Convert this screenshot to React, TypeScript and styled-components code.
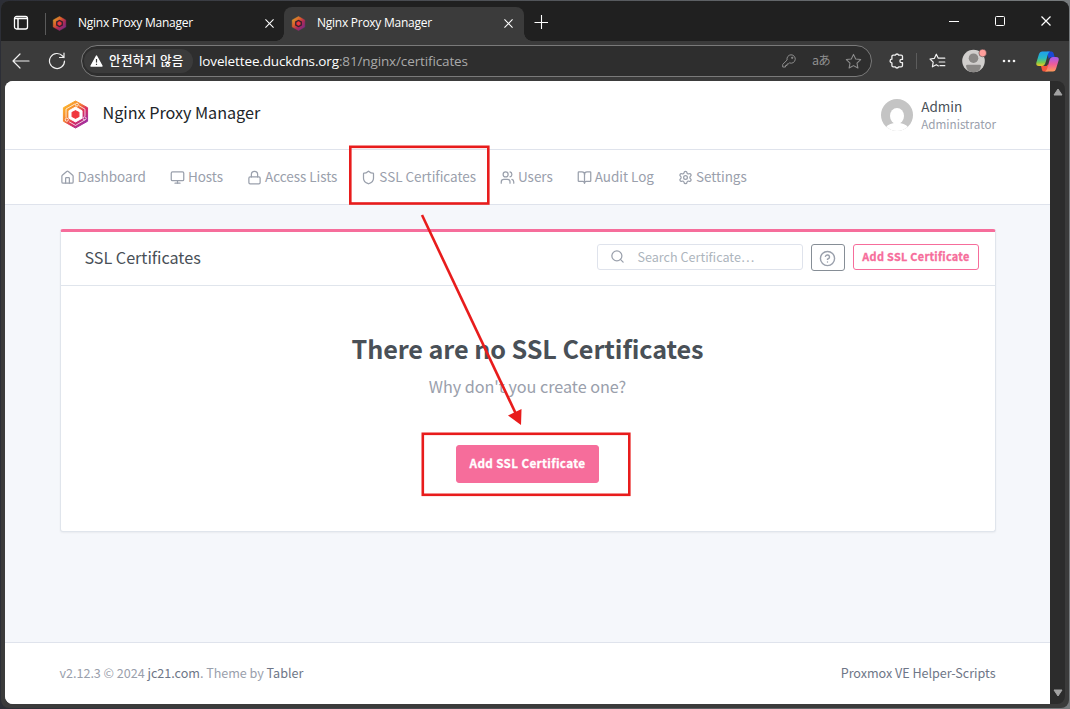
import React from "react";
import styled, { createGlobalStyle } from "styled-components";
import { House, Monitor, Lock, Shield, Users, BookOpen, Settings, Search, CircleHelp } from "lucide-react";

const sans = `"Noto Sans CJK KR", "Noto Sans CJK JP", "Noto Sans", sans-serif`;
const chrome = `"Open Sans", "Noto Sans CJK KR", sans-serif`;

const GlobalStyle = createGlobalStyle`
  * { box-sizing: border-box; }
  body { margin: 0; background: #34363b; overflow: hidden; }
`;

const Desktop = styled.div`
  position: relative;
  width: 1070px;
  height: 709px;
  padding: 1px 1px 1px;
  background: linear-gradient(90deg, #2c2e36, #777b7d);
`;

const BrowserWindow = styled.div`
  display: flex;
  flex-direction: column;
  height: 707px;
  border-radius: 8px;
  overflow: hidden;
  background: #3b3b3b;
  font-family: ${chrome};
`;

const TitleBar = styled.div`
  display: flex;
  align-items: flex-end;
  height: 40px;
  flex: none;
  background: #202020;
`;

const TabActions = styled.div`
  width: 45px;
  height: 34px;
  padding: 8px 0 0 12px;
  border-right: 1px solid transparent;
  border-image: linear-gradient(#202020 7px, #5a5a5a 7px, #5a5a5a 27px, #202020 27px) 1;
  line-height: 0;
`;

const Tab = styled.div<{ $active?: boolean; $width: number }>`
  position: relative;
  display: flex;
  align-items: center;
  width: ${(p) => p.$width}px;
  height: 34px;
  padding: 0 ${(p) => (p.$active ? 11 : 10)}px 2px ${(p) => (p.$active ? 7 : 6)}px;
  border-radius: 8px 8px 0 0;
  color: #fff;
  background: ${(p) => (p.$active ? "#3b3b3b" : "transparent")};
  ${(p) =>
    p.$active &&
    `
    &::before, &::after {
      content: "";
      position: absolute;
      bottom: 0;
      width: 8px;
      height: 8px;
    }
    &::before { left: -8px; background: radial-gradient(circle at 0 0, transparent 7.5px, #3b3b3b 8px); }
    &::after { right: -8px; background: radial-gradient(circle at 100% 0, transparent 7.5px, #3b3b3b 8px); }
  `}
`;

const TabTitle = styled.span`
  flex: 1;
  margin-left: 11px;
  font-size: 12px;
  line-height: 16px;
  letter-spacing: -0.26px;
  white-space: nowrap;
`;

const NewTab = styled.div`
  flex: 1;
  height: 34px;
  padding: 8px 0 0 10px;
  line-height: 0;
`;

const WindowButton = styled.div`
  display: flex;
  justify-content: center;
  align-items: center;
  width: 46px;
  height: 40px;
  padding-bottom: 1px;
`;

const Toolbar = styled.div`
  display: flex;
  align-items: center;
  height: 40px;
  flex: none;
  color: #f0f0f0;
`;

const ToolSlot = styled.div<{ $width: number }>`
  display: flex;
  justify-content: center;
  align-items: center;
  flex: none;
  width: ${(p) => p.$width}px;
`;

const AddressBar = styled.div`
  display: flex;
  align-items: center;
  width: 791px;
  height: 32px;
  padding: 0 1px 0 2px;
  border: 1px solid #7a7a7a;
  border-radius: 16px;
  background: #2e2e2e;
`;

const SecurityBadge = styled.div`
  display: flex;
  align-items: center;
  gap: 6px;
  width: 109px;
  height: 24px;
  padding-left: 6px;
  border-radius: 12px;
  background: #3b3b3b;
  color: #fff;
  font: 500 12.6px/16px "Noto Sans CJK KR", sans-serif;
  letter-spacing: 0.35px;
  white-space: nowrap;
`;

const BadgeText = styled.span`
  margin-top: -3px;
`;

const Url = styled.div`
  flex: 1;
  margin-left: 6px;
  color: #fff;
  font-size: 13.5px;
  line-height: 20px;
  letter-spacing: -0.13px;
  white-space: nowrap;
  span { color: #a9a9a9; }
`;

const Translate = styled.span`
  margin-top: -2px;
  color: #8d8d8d;
  font: 400 12.5px/18px "Noto Sans CJK JP", sans-serif;
  letter-spacing: -0.8px;
`;

const Divider = styled.div`
  width: 1px;
  height: 16px;
  background: #5c5c5c;
`;

const ViewportRow = styled.div`
  display: flex;
  height: 623px;
  margin: 0 4px 0 4px;
  border-radius: 8px;
  overflow: hidden;
`;

const Page = styled.div`
  display: flex;
  flex-direction: column;
  width: 1045px;
  background: #f5f7fb;
  font-family: ${sans};
  color: #495057;
`;

const ScrollBar = styled.div`
  display: flex;
  flex-direction: column;
  justify-content: space-between;
  align-items: center;
  width: 15px;
  padding: 7px 0;
  background: #2c2c2c;
`;

const Header = styled.header`
  display: flex;
  justify-content: space-between;
  align-items: center;
  height: 69px;
  padding: 0 54px 0 56px;
  border-bottom: 1px solid #dfe3ec;
  background: #fff;
`;

const Brand = styled.div`
  display: flex;
  align-items: center;
  gap: 12.5px;
  padding-bottom: 1px;
  color: #212529;
  font-size: 16.2px;
  line-height: 24px;
  letter-spacing: -0.03px;
`;

const BrandName = styled.span`
  margin-top: -6px;
`;

const User = styled.div`
  display: flex;
  align-items: center;
  gap: 8px;
  padding-bottom: 1px;
`;

const UserName = styled.div`
  font-size: 13.5px;
  line-height: 18px;
`;

const UserRole = styled.div`
  color: #9aa0ac;
  font-size: 11.7px;
  line-height: 17px;
`;

const Nav = styled.nav`
  display: flex;
  align-items: center;
  gap: 24px;
  height: 55px;
  padding: 0 54.5px;
  border-bottom: 1px solid #dfe3ec;
  background: #fff;
`;

const NavItem = styled.a`
  display: flex;
  align-items: center;
  gap: 3px;
  color: #9aa0ac;
  font-size: 13.5px;
  line-height: 22px;
  letter-spacing: -0.04px;
  white-space: nowrap;
  span { margin-top: -2px; }
`;

const Main = styled.main`
  flex: 1;
  padding: 24px 54px 0 55px;
`;

const Card = styled.section`
  height: 303px;
  border: 1px solid #e0e5ec;
  border-top: 3px solid #f66d9b;
  border-radius: 3px;
  background: #fff;
  box-shadow: 0 1px 2px rgba(0, 0, 0, 0.05);
`;

const CardHeader = styled.div`
  display: flex;
  align-items: flex-start;
  gap: 8px;
  height: 54px;
  padding: 12px 16px 0 23.5px;
  border-bottom: 1px solid #e0e5ec;
`;

const CardTitle = styled.h3`
  flex: 1;
  margin: 1px 0 0;
  font-size: 16.2px;
  font-weight: 400;
  line-height: 24px;
  letter-spacing: -0.03px;
`;

const SearchField = styled.div`
  display: flex;
  align-items: center;
  gap: 13px;
  width: 206px;
  height: 26px;
  padding-left: 12px;
  border: 1px solid #dfe3ec;
  border-radius: 3px;
  color: #9aa0ac;
  font-size: 12.6px;
  line-height: 20px;
  svg { margin: -1px 0 0 -0.5px; }
  span { color: #adb5bd; }
`;

const HelpButton = styled.button`
  display: flex;
  justify-content: center;
  align-items: center;
  width: 34px;
  height: 27px;
  padding: 1px 1px 0 0;
  border: 1px solid #868e96;
  border-radius: 3px;
  background: #fff;
  color: #9aa0ac;
`;

const AddButton = styled.button<{ $filled?: boolean }>`
  width: ${(p) => (p.$filled ? 143 : 126)}px;
  height: ${(p) => (p.$filled ? 38 : 26)}px;
  padding: 0 0 2px;
  border: 1px solid #f66d9b;
  border-radius: 3px;
  background: ${(p) => (p.$filled ? "#f66d9b" : "#fff")};
  color: ${(p) => (p.$filled ? "#fff" : "#f66d9b")};
  font: 700 ${(p) => (p.$filled ? "11.7px" : "10.9px")} / 20px ${sans};
  letter-spacing: ${(p) => (p.$filled ? 0.36 : 0.3)}px;
  -webkit-text-stroke: 0.3px currentColor;
  white-space: nowrap;
`;

const EmptyState = styled.div`
  display: flex;
  flex-direction: column;
  align-items: center;
  padding: 46px 1px 0 0;
`;

const EmptyTitle = styled.h1`
  margin: 0;
  font-size: 25.2px;
  font-weight: 700;
  line-height: 32px;
  letter-spacing: -0.08px;
  white-space: nowrap;
`;

const EmptyText = styled.p`
  margin: 10px 0 47px;
  color: #9aa0ac;
  font-size: 16.2px;
  line-height: 24px;
  letter-spacing: -0.03px;
`;

const Footer = styled.footer`
  display: flex;
  justify-content: space-between;
  height: 62px;
  padding: 20px 54.5px 0;
  border-top: 1px solid #dfe3ec;
  background: #fff;
  color: #9aa0ac;
  font-size: 12.6px;
  line-height: 20px;
  letter-spacing: -0.03px;
  a { color: #6e7687; }
`;

const Annotations = styled.svg`
  position: absolute;
  left: 0;
  top: 0;
`;

const Logo = ({ size, small, id }: { size: number; small?: boolean; id: string }) => (
  <svg width={size} height={size} viewBox="0 0 30 30">
    <defs>
      <linearGradient id={id} x1="0.1" y1="0.1" x2="0.9" y2="0.95">
        <stop offset="0" stopColor={small ? "#d99a2c" : "#fbb62c"} />
        <stop offset="0.35" stopColor={small ? "#dc5a2c" : "#f5832d"} />
        <stop offset="0.6" stopColor={small ? "#b02a56" : "#dd2c5c"} />
        <stop offset="1" stopColor={small ? "#742a8c" : "#8e2bb0"} />
      </linearGradient>
    </defs>
    <path d="M15 1 27.5 8v14L15 29 2.5 22V8Z" fill={`url(#${id})`} stroke={`url(#${id})`} strokeLinejoin="round" />
    {!small && (
      <g fill="none" stroke="#fff" strokeWidth="0.8">
        <path d="M14.6 4 5.2 9.3v9M24.8 20.5 15 26.3l-6.5-3.7M24.8 16.5v-7l-6-3.5" />
        <circle cx="6" cy="20.4" r="1.6" />
        <circle cx="16.5" cy="4.8" r="1.5" />
        <circle cx="24.4" cy="19" r="1.6" />
      </g>
    )}
    <path d="M15 7.3 21.8 11.1v7.8L15 22.7l-6.8-3.8v-7.8Z" fill={small ? "#33212e" : "#fff"} stroke={small ? "none" : "#fff"} strokeLinejoin="round" />
    <path d="M15 11 18.5 13v4L15 19l-3.5-2v-4Z" fill="#f0383f" stroke="#f0383f" strokeWidth="1.2" strokeLinejoin="round" />
  </svg>
);

const CloseIcon = ({ size = 10 }: { size?: number }) => (
  <svg width={size} height={size} viewBox="0 0 10 10" fill="none" stroke="#fff" strokeWidth="1.2">
    <path d="M.5.5l9 9M9.5.5l-9 9" />
  </svg>
);

const starPath = "M8 1.3l2.05 4.3 4.7.6-3.45 3.25.85 4.7L8 11.85l-4.15 2.3.85-4.7L1.25 6.2l4.7-.6Z";

const navItems = [
  { label: "Dashboard", Icon: House },
  { label: "Hosts", Icon: Monitor },
  { label: "Access Lists", Icon: Lock },
  { label: "SSL Certificates", Icon: Shield },
  { label: "Users", Icon: Users },
  { label: "Audit Log", Icon: BookOpen },
  { label: "Settings", Icon: Settings },
];

const BrowserTab = ({ active, width, id }: { active?: boolean; width: number; id: string }) => (
  <Tab $active={active} $width={width}>
    <Logo size={15} small id={id} />
    <TabTitle>Nginx Proxy Manager</TabTitle>
    <CloseIcon size={9} />
  </Tab>
);

const BrowserToolbar = () => (
  <Toolbar>
    <ToolSlot $width={40}>
      <svg width="18" height="16" viewBox="0 0 18 16" fill="none" stroke="currentColor" strokeWidth="1.2" strokeLinecap="round" strokeLinejoin="round">
        <path d="M17 8H1M8 1 1 8l7 7" />
      </svg>
    </ToolSlot>
    <ToolSlot $width={32}>
      <svg width="18" height="18" viewBox="0 0 18 18" fill="none" stroke="currentColor" strokeWidth="1.2" strokeLinecap="round">
        <path d="M16.5 9A7.5 7.5 0 1 1 14.6 4L16 5.5M16 1v4.5h-4.5" />
      </svg>
    </ToolSlot>
    <ToolSlot $width={8} />
    <AddressBar>
      <SecurityBadge>
        <svg width="13" height="12" viewBox="0 0 13 12">
          <path d="M6.5 1 12 11H1Z" fill="#fff" stroke="#fff" strokeWidth="1.4" strokeLinejoin="round" />
          <path d="M6.5 4v3.5M6.5 8.7v1.3" stroke="#3b3b3b" strokeWidth="1.2" />
        </svg>
        <BadgeText>안전하지 않음</BadgeText>
      </SecurityBadge>
      <Url>lovelettee.duckdns.org<span>:81/nginx/certificates</span></Url>
      <ToolSlot $width={32}>
        <svg width="14" height="14" viewBox="0 0 14 14" fill="none" stroke="#8d8d8d" strokeWidth="1">
          <path d="M9 .8a4.2 4.2 0 1 1-1.5 8.1L6.2 10H5v1.5H3.5V13H.7v-2.6L5.1 6A4.2 4.2 0 0 1 9 .8Z" />
          <circle cx="10.2" cy="3.8" r=".7" fill="#8d8d8d" />
        </svg>
      </ToolSlot>
      <ToolSlot $width={32}><Translate>aあ</Translate></ToolSlot>
      <ToolSlot $width={33}>
        <svg width="17" height="17" viewBox="0 0 16 16" fill="none" stroke="#8d8d8d" strokeLinejoin="round"><path d={starPath} /></svg>
      </ToolSlot>
    </AddressBar>
    <ToolSlot $width={8} />
    <ToolSlot $width={34}>
      <svg width="16" height="16" viewBox="0 0 16 16" fill="none" stroke="currentColor" strokeWidth="1.3" strokeLinejoin="round">
        <path d="M4.3 2.2h2a1.8 1.8 0 0 1 3.4 0h2.4q1.4 0 1.4 1.4v2.8h-1a1.6 1.6 0 0 0 0 3.2h1v2.8q0 1.4-1.4 1.4H9.7a1.8 1.8 0 0 1-3.4 0h-2q-1.4 0-1.4-1.4V9.8a1.8 1.8 0 1 1 0-3.6V3.6q0-1.4 1.4-1.4Z" />
      </svg>
    </ToolSlot>
    <ToolSlot $width={5}><Divider /></ToolSlot>
    <ToolSlot $width={37}>
      <svg width="17" height="16" viewBox="0 0 17 16" fill="none" stroke="currentColor" strokeWidth="1.2" strokeLinejoin="round" strokeLinecap="round">
        <path d="M9.3 5.2 7.3 1.2 5.3 5.4 1 6l3.2 3.2-.8 4.6 3.9-2.1 2.1 1.2M9.3 5.2h6.5M10.2 9h5.6M11 12.7h4.8" />
      </svg>
    </ToolSlot>
    <ToolSlot $width={35}>
      <svg width="26" height="26" viewBox="0 0 26 26">
        <defs><clipPath id="profile"><circle cx="12.5" cy="13" r="11.3" /></clipPath></defs>
        <circle cx="12.5" cy="13" r="11.3" fill="#d0cecc" />
        <g clipPath="url(#profile)" fill="#8a8886">
          <circle cx="12.5" cy="10.2" r="4.8" />
          <path d="M5 18q0-1.3 1.5-1.3h12q1.5 0 1.5 1.3Q19 24.5 12.5 24.5T5 18Z" />
        </g>
        <circle cx="21.7" cy="5" r="3.8" fill="#ff9e9b" stroke="#3b3b3b" strokeWidth=".5" />
      </svg>
    </ToolSlot>
    <ToolSlot $width={36}>
      <svg width="14" height="4" viewBox="0 0 14 4" fill="currentColor">
        <circle cx="2" cy="2" r="1.3" /><circle cx="7" cy="2" r="1.3" /><circle cx="12" cy="2" r="1.3" />
      </svg>
    </ToolSlot>
    <ToolSlot $width={40}>
      <svg width="23" height="21" viewBox="0 0 23 21">
        <defs>
          <linearGradient id="copilotA" x1="0" y1="0" x2="0" y2="1">
            <stop offset="0" stopColor="#1e9fee" /><stop offset=".45" stopColor="#27b9c5" /><stop offset=".75" stopColor="#79c94b" /><stop offset="1" stopColor="#f6c626" />
          </linearGradient>
          <linearGradient id="copilotB" x1="0" y1="0" x2="0" y2="1">
            <stop offset="0" stopColor="#a25af2" /><stop offset=".5" stopColor="#ee5b9a" /><stop offset="1" stopColor="#ff9a58" />
          </linearGradient>
        </defs>
        <path d="M11 .5h4.5q1.5 0 2 1.5l1.2 4h-3q-2 0-3 2Z" fill="#1949d6" />
        <path d="M5 15h5.5l1.7-2 .2 5.5-.8 2H8q-1.6 0-2-1.5Z" fill="#f4543c" />
        <path d="M6 .5h8q-1.6.8-2.2 3l-2 7.3q-1 4.2-3.8 4.2H3q-3.4 0-2.6-3.4L3 3Q3.7.5 6 .5Z" fill="url(#copilotA)" />
        <path d="M17 20.5H9q1.6-.8 2.2-3l2-7.3q1-4.2 3.8-4.2h3q3.4 0 2.6 3.4L20 18q-.7 2.5-3 2.5Z" fill="url(#copilotB)" />
      </svg>
    </ToolSlot>
  </Toolbar>
);

export default function App() {
  return (
    <Desktop>
      <GlobalStyle />
      <BrowserWindow>
        <TitleBar>
          <TabActions>
            <svg width="16" height="15" viewBox="0 0 16 15" fill="none" stroke="#fff" strokeWidth="1.3">
              <rect x="1.5" y="1.5" width="13" height="12.5" rx="2" />
              <path d="M2 3.5h12M5 4v10" strokeWidth="1.5" />
            </svg>
          </TabActions>
          <BrowserTab width={238} id="tabLogoOne" />
          <BrowserTab active width={240} id="tabLogoTwo" />
          <NewTab>
            <svg width="14" height="14" viewBox="0 0 14 14" stroke="#fff" strokeWidth="1.1"><path d="M7.5 0v14M.5 7.5h14" /></svg>
          </NewTab>
          <WindowButton><svg width="10" height="10" stroke="#fff"><path d="M0 5.5h10" /></svg></WindowButton>
          <WindowButton><svg width="11" height="11" stroke="#fff" fill="none"><rect x=".5" y="1.5" width="9" height="9" rx="1" /></svg></WindowButton>
          <WindowButton><CloseIcon size={10} /></WindowButton>
        </TitleBar>
        <BrowserToolbar />
        <ViewportRow>
          <Page>
            <Header>
              <Brand>
                <Logo size={29} id="brandLogo" />
                <BrandName>Nginx Proxy Manager</BrandName>
              </Brand>
              <User>
                <svg width="32" height="32" viewBox="0 0 32 32">
                  <defs><clipPath id="avatar"><circle cx="16" cy="16" r="16" /></clipPath></defs>
                  <g clipPath="url(#avatar)">
                    <rect width="32" height="32" fill="#c4c4c4" />
                    <ellipse cx="16" cy="17" rx="7" ry="8" fill="#fff" />
                    <path d="M3 32q2-7 10-8h6q8 1 10 8Z" fill="#fff" />
                  </g>
                </svg>
                <div>
                  <UserName>Admin</UserName>
                  <UserRole>Administrator</UserRole>
                </div>
              </User>
            </Header>
            <Nav>
              {navItems.map(({ label, Icon }) => (
                <NavItem key={label}>
                  <Icon size={15} strokeWidth={2} />
                  <span>{label}</span>
                </NavItem>
              ))}
            </Nav>
            <Main>
              <Card>
                <CardHeader>
                  <CardTitle>SSL Certificates</CardTitle>
                  <SearchField>
                    <Search size={15} />
                    <span>Search Certificate…</span>
                  </SearchField>
                  <HelpButton><CircleHelp size={17} /></HelpButton>
                  <AddButton>Add SSL Certificate</AddButton>
                </CardHeader>
                <EmptyState>
                  <EmptyTitle>There are no SSL Certificates</EmptyTitle>
                  <EmptyText>Why don't you create one?</EmptyText>
                  <AddButton $filled>Add SSL Certificate</AddButton>
                </EmptyState>
              </Card>
            </Main>
            <Footer>
              <div>v2.12.3 © 2024 <a>jc21.com</a>. Theme by <a>Tabler</a></div>
              <a>Proxmox VE Helper-Scripts</a>
            </Footer>
          </Page>
          <ScrollBar>
            <svg width="10" height="8"><path d="M5 1 9 7H1Z" fill="#a3a3a3" stroke="#a3a3a3" strokeLinejoin="round" /></svg>
            <svg width="10" height="8"><path d="M5 7 9 1H1Z" fill="#a3a3a3" stroke="#a3a3a3" strokeLinejoin="round" /></svg>
          </ScrollBar>
        </ViewportRow>
      </BrowserWindow>
      <Annotations width="1070" height="709" viewBox="0 0 1070 709" fill="none" stroke="#e81c1c" strokeWidth="2.6">
        <rect x="350.3" y="146.8" width="138" height="56.7" />
        <rect x="422.8" y="433.8" width="206.5" height="61" />
        <path d="M422 215 515.5 413" />
        <path d="M521 425 508 415.5 521.5 409Z" fill="#e81c1c" stroke="none" />
      </Annotations>
    </Desktop>
  );
}
